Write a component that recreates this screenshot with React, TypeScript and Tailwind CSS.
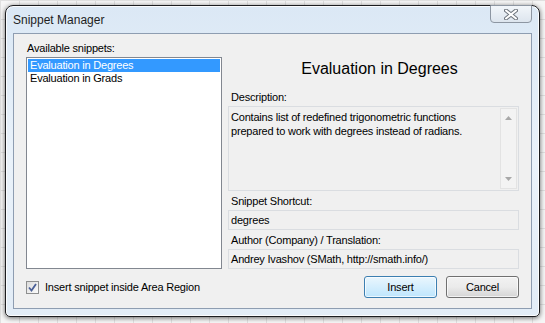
import React from 'react';

const labelCls = 'h-[13px] leading-[13px] pl-[3px] text-[11px] tracking-[-0.2px] text-black';

const CloseGlyph: React.FC = () => (
  <svg width="14" height="11" viewBox="0 0 14 11">
    <path d="M2 1.5 L12 9.5 M12 1.5 L2 9.5" stroke="#6f757d" strokeWidth="4" strokeLinecap="round" fill="none" />
    <path d="M2 1.5 L12 9.5 M12 1.5 L2 9.5" stroke="#ffffff" strokeWidth="2" strokeLinecap="round" fill="none" />
  </svg>
);

const CheckBox: React.FC = () => (
  <div className="w-[13px] h-[13px] border border-[#8e8f8f] bg-gradient-to-br from-[#dcdcdc] to-[#fbfbfb] flex items-center justify-center">
    <svg width="9" height="9" viewBox="0 0 9 9">
      <path d="M1 4.5 L3.5 7.5 L8 1" stroke="#4a5f97" strokeWidth="1.8" fill="none" />
    </svg>
  </div>
);

const ReadBox: React.FC<{ text: string }> = ({ text }) => (
  <div className="mt-[2px] h-[20px] border border-[#dadde1] bg-[#f0f0f0] flex items-center pl-[2px] text-[11px] tracking-[-0.2px]">
    {text}
  </div>
);

export default function App() {
  return (
    <div className="w-[545px] h-[323px] pt-[5px] pl-[5px] bg-[#f6f6f6] bg-[linear-gradient(to_right,#e0e0e0_1px,transparent_1px),linear-gradient(to_bottom,#e0e0e0_1px,transparent_1px)] bg-[size:19px_19px] font-['Liberation_Sans',Arial,sans-serif] overflow-hidden">
      <div className="w-[535px] h-[312px] flex flex-col rounded-t-[8px] rounded-b-[5px] border border-[#1c1d20] bg-gradient-to-b from-[#dbe8f5] via-[#eaf2fa] to-[#e2ecf6] px-[7px] pb-[7px] shadow-[inset_0_0_0_1px_rgba(255,255,255,0.85),0_1px_5px_rgba(0,0,0,0.6)]">
        {/* title bar */}
        <div className="h-[27px] flex items-start justify-between">
          <span className="mt-[7px] text-[12px] leading-[14px] text-[#1e1e1e]">Snippet Manager</span>
          <div className="-mt-[1px] w-[42px] h-[18px] rounded-b-[4px] border border-[#8d96a2] bg-gradient-to-b from-[#f2f6fa] to-[#dde5ee] flex items-center justify-center">
            <CloseGlyph />
          </div>
        </div>

        {/* client area */}
        <div className="flex-1 border border-[#8e9db1] bg-[#f0f0f0] flex flex-col px-[12px]">
          <div className="flex gap-[6px] h-[235px]">
            {/* left column */}
            <div className="w-[196px] flex flex-col pt-[8px]">
              <div className="h-[13px] leading-[13px] pl-[1px] text-[11px] tracking-[-0.2px]">Available snippets:</div>
              <div className="mt-[2px] h-[212px] border border-[#828790] bg-white p-[1px] text-[11px] tracking-[-0.2px]">
                <div className="h-[13px] leading-[13px] bg-[#3399ff] text-white pl-[2px]">Evaluation in Degrees</div>
                <div className="h-[13px] leading-[13px] pl-[2px]">Evaluation in Grads</div>
              </div>
            </div>

            {/* right column */}
            <div className="flex-1 flex flex-col pt-[25px]">
              <div className="h-[20px] leading-[20px] pl-[12px] text-center text-[16px] text-black">Evaluation in Degrees</div>
              <div className={`mt-[12px] ${labelCls}`}>Description:</div>
              <div className="mt-[2px] h-[85px] border border-[#dadde1] bg-[#f0f0f0] flex">
                <div className="flex-1 pl-[2px] pt-[3px] text-[11px] leading-[14px] tracking-[-0.2px]">
                  Contains list of redefined trigonometric functions<br />
                  prepared to work with degrees instead of radians.
                </div>
                <div className="w-[17px] my-[1px] mr-[1px] border border-[#e3e3e3] bg-[#f3f3f3] flex flex-col items-center justify-between py-[7px]">
                  <svg width="7" height="4" viewBox="0 0 7 4"><path d="M0 4 L3.5 0 L7 4 Z" fill="#a8a8a8" /></svg>
                  <svg width="7" height="4" viewBox="0 0 7 4"><path d="M0 0 L3.5 4 L7 0 Z" fill="#a8a8a8" /></svg>
                </div>
              </div>
              <div className={`mt-[4px] ${labelCls}`}>Snippet Shortcut:</div>
              <ReadBox text="degrees" />
              <div className={`mt-[4px] ${labelCls}`}>Author (Company) / Translation:</div>
              <ReadBox text="Andrey Ivashov (SMath, http://smath.info/)" />
            </div>
          </div>

          {/* bottom row */}
          <div className="mt-[7px] h-[22px] flex items-center">
            <CheckBox />
            <span className="ml-[6px] text-[11px] tracking-[-0.2px]">Insert snippet inside Area Region</span>
            <div className="ml-auto flex gap-[9px]">
              <button className="w-[73px] h-[22px] rounded-[3px] border border-[#3c7fb1] bg-gradient-to-b from-[#eaf6fd] to-[#bee6fd] shadow-[inset_0_0_0_1px_rgba(255,255,255,0.7)] text-[11px] tracking-[-0.2px] text-black">
                Insert
              </button>
              <button className="w-[73px] h-[22px] rounded-[3px] border border-[#707070] bg-gradient-to-b from-[#f2f2f2] via-[#ebebeb] to-[#d5d5d5] shadow-[inset_0_0_0_1px_rgba(255,255,255,0.7)] text-[11px] tracking-[-0.2px] text-black">
                Cancel
              </button>
            </div>
          </div>
        </div>
      </div>
    </div>
  );
}
